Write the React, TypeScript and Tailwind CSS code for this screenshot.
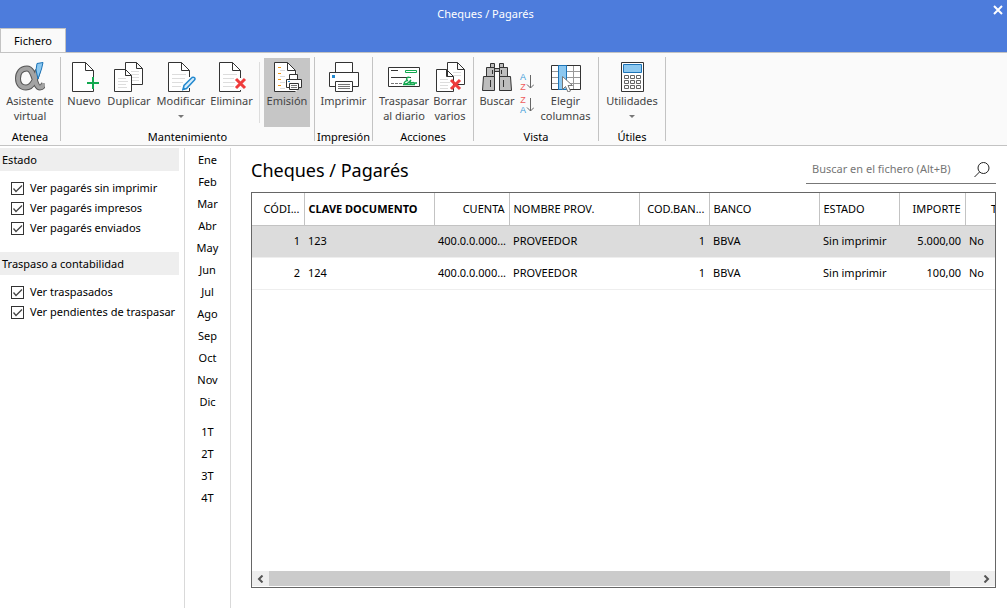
import { useState } from 'react';
import type { ReactNode } from 'react';
import clsx from 'clsx';

const months = ['Ene', 'Feb', 'Mar', 'Abr', 'May', 'Jun', 'Jul', 'Ago', 'Sep', 'Oct', 'Nov', 'Dic'];
const quarters = ['1T', '2T', '3T', '4T'];

const filters = [
  { title: 'Estado', options: ['Ver pagarés sin imprimir', 'Ver pagarés impresos', 'Ver pagarés enviados'] },
  { title: 'Traspaso a contabilidad', options: ['Ver traspasados', 'Ver pendientes de traspasar'] },
];

const columns = [
  { title: 'CÓDI...', width: 'w-[52px]', align: 'text-right' },
  { title: 'CLAVE DOCUMENTO', width: 'w-[130px]', align: 'text-left', bold: true },
  { title: 'CUENTA', width: 'w-[75px]', align: 'text-right' },
  { title: 'NOMBRE PROV.', width: 'w-[130px]', align: 'text-left' },
  { title: 'COD.BAN...', width: 'w-[70px]', align: 'text-right' },
  { title: 'BANCO', width: 'w-[110px]', align: 'text-left' },
  { title: 'ESTADO', width: 'w-[80px]', align: 'text-left' },
  { title: 'IMPORTE', width: 'w-[66px]', align: 'text-right' },
  { title: 'T', width: 'w-[58px]', align: 'text-center' },
];

const rows = [
  ['1', '123', '400.0.0.000...', 'PROVEEDOR', '1', 'BBVA', 'Sin imprimir', '5.000,00', 'No'],
  ['2', '124', '400.0.0.000...', 'PROVEEDOR', '1', 'BBVA', 'Sin imprimir', '100,00', 'No'],
];

function Icon({ children, width = 30 }: { children: ReactNode; width?: number }) {
  return (
    <svg width={width} height="30" viewBox={`0 0 ${width} 30`} fill="none" stroke="#333" aria-hidden="true" className="shrink-0">
      {children}
    </svg>
  );
}

function RedCross({ x, y }: { x: number; y: number }) {
  return <path d={`M${x} ${y}l9 9M${x + 9} ${y}l-9 9`} stroke="#ef3b3b" strokeWidth="3" />;
}

function AlphaIcon() {
  return (
    <Icon>
      <path d="M23 8c-2 8-5 17.500-12 17.500-5 0-8-3.500-8-9S6 6.500 12 6.500c8 0 7 19 13 19 2 0 3-1 4-4" stroke="#555" strokeWidth="6" />
      <path d="M23 8c-2 8-5 17.500-12 17.500-5 0-8-3.500-8-9S6 6.500 12 6.500c8 0 7 19 13 19 2 0 3-1 4-4" stroke="#a3a3a3" strokeWidth="4" />
      <path d="M22 1.500 28 .5 26.500 7 23 17 21 8Z" fill="#8cc8f0" stroke="#1c74b8" />
    </Icon>
  );
}

function NewIcon() {
  return (
    <Icon>
      <path d="M24.500 15V8.500L16.500.5h-13v29h21V27M16.500.5v8h8" fill="#fff" />
      <path d="M24 15v12M18 21h12" stroke="#12a84f" strokeWidth="2" />
    </Icon>
  );
}

function DuplicateIcon() {
  return (
    <Icon>
      <path d="M11.500.5h11l6 6v16h-17zM22.500.5v6h6" fill="#fff" />
      <path d="M17 9.500h8M17 12.500h8M17 15.500h8M17 18.500h8" stroke="#ddd" />
      <path d="M.5 7.500h11l6 6v16H.5zM11.500 7.500v6h6" fill="#fff" />
      <path d="M4 16.500h8M4 19.500h10M4 22.500h8M4 25.500h9" stroke="#ddd" />
    </Icon>
  );
}

function EditIcon() {
  return (
    <Icon>
      <path d="M23.500 15V8.500L15.500.5h-13v29h21V26M15.500.5v8h8" fill="#fff" />
      <path d="M6 12.500h14M6 16.500h13M6 20.500h11M6 24.500h9" stroke="#ddd" />
      <path d="M17 27.500 18 23.500 26 15.500c2-1 4 1 2.500 2.500L20.500 26.500Z" fill="#d6ecfb" stroke="#2389cf" strokeWidth="1.500" />
      <path d="M16 28.500 19.500 27 17.500 25Z" fill="#2389cf" stroke="none" />
    </Icon>
  );
}

function DeleteIcon() {
  return (
    <Icon>
      <path d="M23.500 16V8.500L15.500.5h-13v29h21V28M15.500.5v8h8" fill="#fff" />
      <path d="M6 12.500h14M6 16.500h11M6 20.500h12M6 24.500h11" stroke="#ddd" />
      <RedCross x={19} y={17} />
    </Icon>
  );
}

function IssueIcon() {
  return (
    <Icon>
      <path d="M23.500 12V8.500L15.500.5h-13v29h22V8.500z" fill="#fff" stroke="none" />
      <path d="M23.500 12V8.500L15.500.5h-13v29h21M15.500.5v8h8" />
      <path d="M6 5.500h3M6 11.500h3M6 17.500h3M6 23.500h3" stroke="#f09a1a" />
      <path d="M8 8.500h5M8 14.500h5M8 20.500h5M8 26.500h5" stroke="#ddd" />
      <path d="M17.500 12.500h8v5h-8zM14.500 17.500h15v8h-15z" fill="#fff" />
      <path d="M17.500 21.500h9v6h-9z" fill="#fff" />
      <path d="M19 23.500h6M19 25.500h6" stroke="#777" />
      <path d="M16 19.500h2" stroke="#2389cf" />
    </Icon>
  );
}

function PrinterIcon() {
  return (
    <Icon>
      <path d="M6.500.5h17v10h-17zM.5 10.500h29v14H.5z" fill="#fff" />
      <path d="M6.500 19.500h17v10h-17z" fill="#fff" />
      <path d="M9 22.500h12M9 24.500h12M9 26.500h12" stroke="#777" />
      <path d="M3 13h3v3H3z" fill="#2389cf" stroke="none" />
    </Icon>
  );
}

function ChequeIcon() {
  return (
    <Icon width={32}>
      <path d="M.5 5.500h31v19H.5z" fill="#fff" />
      <path d="M3 8.500h7M3 15.500h20" />
      <path d="M3 21.500h3M7 21.500h3M11 21.500h3" stroke="#777" />
      <path d="M17.500 8.500h11v2h-11z" stroke="#12a84f" />
      <path d="M22 15.500c-3-1-5 2-2 3-3 0-5 3-3 3.500 3 0 4-2 6-4-2 3-1 4 0 2.500 1 1 2-1 3 .5h3M15 22.500h12" stroke="#12a84f" strokeWidth="1.300" />
    </Icon>
  );
}

function DeleteManyIcon() {
  return (
    <Icon>
      <path d="M12.500.5h10l7 7v15h-17zM22.500.5v7h7" fill="#fff" />
      <path d="M18 10.500h8M18 13.500h8" stroke="#ddd" />
      <path d="M1.500 7.500h10l7 7v15h-17zM11.500 7.500v7h7" fill="#fff" />
      <path d="M5 17.500h8M5 20.500h10M5 23.500h8M5 26.500h8" stroke="#ddd" />
      <RedCross x={16} y={18} />
    </Icon>
  );
}

function BinocularsIcon() {
  return (
    <Icon>
      <path d="M8.500 1.500h4v4h-4zM17.500 1.500h4v4h-4zM12.500 6.500h5v3h-5z" fill="#bdbdbd" />
      <path d="M4.500 5.500h8v9h-8zM17.500 5.500h8v9h-8zM1.500 14.500h11v14H.5zM17.500 14.500h11l1 14h-12z" fill="#bdbdbd" />
      <path d="M10.500 8v4M19.500 8v4M8.500 18v7M21.500 18v7" />
    </Icon>
  );
}

function ColumnsIcon() {
  return (
    <Icon>
      <path d="M.5 3.500h29v24H.5z" fill="#fff" />
      <path d="M22.500 4v23M1 9.500h28M1 15.500h28M1 21.500h28" stroke="#999" />
      <path d="M7.500 3.500h8v24h-8z" fill="#8cc8f0" stroke="#1c74b8" />
      <path d="M11.500 14.500v13l3-3 2.500 5.500 2.500-1-2.500-5.500h4.500Z" fill="#fff" stroke="#777" />
    </Icon>
  );
}

function CalculatorIcon() {
  return (
    <Icon>
      <path d="M4.500.5h22v29h-22z" fill="#fff" />
      <path d="M6.500 2.500h18v8h-18z" fill="#8cc8f0" stroke="#1c74b8" />
      {[13.5, 18.5, 23.5].map((y) => (
        <path key={y} d={`M7.500 ${y}h4v3h-4zM13.500 ${y}h4v3h-4zM19.500 ${y}h4v3h-4z`} stroke="#666" />
      ))}
    </Icon>
  );
}

function SortButton({ first, second, label }: { first: string; second: string; label: string }) {
  return (
    <button type="button" aria-label={label} className="flex h-[23px] items-center">
      <span className="flex flex-col font-['Liberation_Sans',sans-serif] text-[9px] leading-[10px]">
        <span className={first === 'A' ? 'text-[#3a9ad9]' : 'text-[#ef5b5b]'}>{first}</span>
        <span className={second === 'A' ? 'text-[#3a9ad9]' : 'text-[#ef5b5b]'}>{second}</span>
      </span>
      <svg width="8" height="16" viewBox="0 0 8 16" fill="none" stroke="#666" aria-hidden="true">
        <path d="M4.500 1v13M1 10.500 4.500 14 8 10.500" />
      </svg>
    </button>
  );
}

function RibbonGroup({ title, className, children }: { title: string; className?: string; children: ReactNode }) {
  return (
    <section className="flex flex-col border-r border-[#c3c3c3]">
      <div className={clsx('flex h-[70px] pt-px', className)}>{children}</div>
      <h2 className="h-3.5 text-center leading-5 text-black">{title}</h2>
    </section>
  );
}

type RibbonButtonProps = {
  icon: ReactNode;
  lines: string[];
  width: string;
  menu?: boolean;
  active?: boolean;
};

function RibbonButton({ icon, lines, width, menu, active }: RibbonButtonProps) {
  return (
    <button
      type="button"
      className={clsx('flex flex-col items-center pt-1 leading-[15px] whitespace-nowrap text-[#444]', width, active && 'bg-[#c6c6c6]')}
    >
      {icon}
      <span className="mt-px flex flex-col items-center">
        {lines.map((line) => (
          <span key={line}>{line}</span>
        ))}
      </span>
      {menu && (
        <svg width="6" height="3" viewBox="0 0 6 3" fill="#777" aria-hidden="true" className="mt-[7px]">
          <path d="M0 0h6L3 3z" />
        </svg>
      )}
    </button>
  );
}

function Ribbon() {
  return (
    <div className="flex border-y border-[#c3c3c3] bg-[#fafafa] py-1">
      <RibbonGroup title="Atenea">
        <RibbonButton icon={<AlphaIcon />} lines={['Asistente', 'virtual']} width="w-[60px]" />
      </RibbonGroup>
      <RibbonGroup title="Mantenimiento" className="pr-1 pl-[3px]">
        <RibbonButton icon={<NewIcon />} lines={['Nuevo']} width="w-10" />
        <RibbonButton icon={<DuplicateIcon />} lines={['Duplicar']} width="w-[50px]" />
        <RibbonButton icon={<EditIcon />} lines={['Modificar']} width="w-[54px]" menu />
        <RibbonButton icon={<DeleteIcon />} lines={['Eliminar']} width="w-[47px]" />
        <div className="mx-1 my-1 border-r border-[#ddd]" />
        <RibbonButton icon={<IssueIcon />} lines={['Emisión']} width="w-[46px]" active />
      </RibbonGroup>
      <RibbonGroup title="Impresión">
        <RibbonButton icon={<PrinterIcon />} lines={['Imprimir']} width="w-[57px]" />
      </RibbonGroup>
      <RibbonGroup title="Acciones" className="px-1">
        <RibbonButton icon={<ChequeIcon />} lines={['Traspasar', 'al diario']} width="w-[54px]" />
        <RibbonButton icon={<DeleteManyIcon />} lines={['Borrar', 'varios']} width="w-[38px]" />
      </RibbonGroup>
      <RibbonGroup title="Vista" className="pr-1 pl-[3px]">
        <RibbonButton icon={<BinocularsIcon />} lines={['Buscar']} width="w-10" />
        <div className="flex w-5 flex-col items-center pt-3">
          <SortButton first="A" second="Z" label="Orden ascendente" />
          <SortButton first="Z" second="A" label="Orden descendente" />
        </div>
        <RibbonButton icon={<ColumnsIcon />} lines={['Elegir', 'columnas']} width="w-[57px]" />
      </RibbonGroup>
      <RibbonGroup title="Útiles">
        <RibbonButton icon={<CalculatorIcon />} lines={['Utilidades']} width="w-[66px]" menu />
      </RibbonGroup>
    </div>
  );
}

function FilterPanel() {
  return (
    <aside className="flex w-[185px] shrink-0 flex-col gap-3.5 border-r border-[#d9d9d9] pr-[5px]">
      {filters.map((group) => (
        <fieldset key={group.title} className="w-full">
          <legend className="mb-[7px] w-full bg-[#eee] px-0.5 leading-[23px]">{group.title}</legend>
          {group.options.map((option) => (
            <label key={option} className="flex h-5 items-center gap-1.5 pl-[11px] whitespace-nowrap">
              <span className="grid">
                <input type="checkbox" defaultChecked className="peer col-start-1 row-start-1 size-[13px] appearance-none border border-[#333] bg-white" />
                <svg viewBox="0 0 13 13" fill="none" stroke="#444" strokeWidth="1.300" aria-hidden="true" className="pointer-events-none invisible col-start-1 row-start-1 size-[13px] peer-checked:visible">
                  <path d="M2.500 6.500 5 9.500 11 3.500" />
                </svg>
              </span>
              {option}
            </label>
          ))}
        </fieldset>
      ))}
    </aside>
  );
}

function PeriodBar() {
  return (
    <nav className="flex w-[46px] shrink-0 flex-col gap-2 border-r border-[#d9d9d9] pt-px">
      {[months, quarters].map((periods) => (
        <div key={periods[0]} className="flex flex-col">
          {periods.map((period) => (
            <button key={period} type="button" className="h-[22px]">
              {period}
            </button>
          ))}
        </div>
      ))}
    </nav>
  );
}

function ChequeTable() {
  const [selected, setSelected] = useState(0);

  return (
    <div className="flex flex-1 flex-col overflow-hidden border border-[#666]">
      <div className="flex-1 overflow-hidden">
        <table className="w-[771px] table-fixed border-collapse">
          <thead>
            <tr className="h-8 border-b border-[#c3c3c3]">
              {columns.map((column) => (
                <th
                  key={column.title}
                  className={clsx('border-r border-[#c3c3c3] px-1 whitespace-nowrap', column.width, column.align, column.bold ? 'font-bold' : 'font-normal')}
                >
                  {column.title}
                </th>
              ))}
            </tr>
          </thead>
          <tbody>
            {rows.map((row, index) => (
              <tr
                key={row[0]}
                onClick={() => setSelected(index)}
                className={clsx('h-8 border-b border-[#eee]', index === selected && 'bg-[#dcdcdc]')}
              >
                {row.map((value, i) => (
                  <td key={columns[i].title} className={clsx('px-1 whitespace-nowrap', i === 8 ? 'text-left' : columns[i].align)}>
                    {value}
                  </td>
                ))}
              </tr>
            ))}
          </tbody>
        </table>
      </div>
      <div className="mb-px flex h-[15px] bg-[#eee]">
        <button type="button" aria-label="Desplazar a la izquierda" className="flex w-[17px] items-center justify-center">
          <svg width="7" height="8" viewBox="0 0 7 8" fill="none" stroke="#555" strokeWidth="2" aria-hidden="true">
            <path d="M5.500.5 2 4l3.500 3.500" />
          </svg>
        </button>
        <div className="flex-1 pr-7">
          <div className="h-full bg-[#cbcbcb]" />
        </div>
        <button type="button" aria-label="Desplazar a la derecha" className="flex w-[17px] items-center justify-center">
          <svg width="7" height="8" viewBox="0 0 7 8" fill="none" stroke="#555" strokeWidth="2" aria-hidden="true">
            <path d="M1.500.5 5 4 1.500 7.500" />
          </svg>
        </button>
      </div>
    </div>
  );
}

export default function App() {
  return (
    <div className="flex min-h-screen flex-col bg-white font-['Noto_Sans',sans-serif] text-[11px] text-black">
      <header className="grid h-[52px] grid-cols-[1fr_auto_1fr] bg-[#4d7cdc]">
        <div className="flex items-end">
          <button type="button" className="-mb-px h-[25px] w-[66px] border border-b-0 border-[#c3c3c3] bg-[#fafafa]">
            Fichero
          </button>
        </div>
        <p className="pt-1.5 pr-9 leading-4 text-white">Cheques / Pagarés</p>
        <div className="flex items-start justify-end pt-[5px] pr-1">
          <button type="button" aria-label="Cerrar">
            <svg width="10" height="10" viewBox="0 0 10 10" stroke="#fff" strokeWidth="2" aria-hidden="true">
              <path d="M1 1l8 8M9 1 1 9" />
            </svg>
          </button>
        </div>
      </header>
      <Ribbon />
      <div className="flex flex-1 pt-0.5">
        <FilterPanel />
        <PeriodBar />
        <main className="flex min-w-0 flex-1 flex-col pr-[11px] pb-5 pl-5">
          <div className="flex h-11 items-start justify-between">
            <h1 className="pt-2 text-[18px] leading-7">Cheques / Pagarés</h1>
            <label className="flex h-9 w-[190px] items-center border-b border-[#777] px-1.5 pt-2">
              <input
                type="text"
                aria-label="Buscar en el fichero"
                placeholder="Buscar en el fichero (Alt+B)"
                className="min-w-0 flex-1 outline-none placeholder:text-[#767676]"
              />
              <svg width="16" height="16" viewBox="0 0 16 16" fill="none" stroke="#222" aria-hidden="true">
                <circle cx="9.500" cy="6" r="5.500" />
                <path d="M5.500 10 .5 15" />
              </svg>
            </label>
          </div>
          <ChequeTable />
        </main>
      </div>
    </div>
  );
}
